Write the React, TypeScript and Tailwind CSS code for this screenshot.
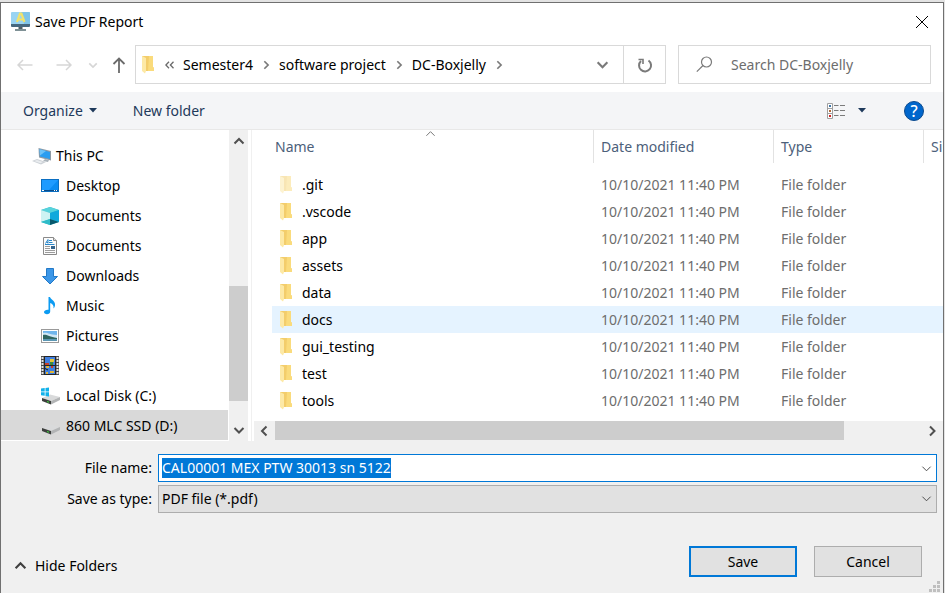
import { useEffect, useRef } from "react";
import type { ReactNode } from "react";

function Chevron({ dir, className }: { dir: "up" | "down" | "left" | "right"; className: string }) {
  const paths = {
    up: "M1.5 8.5 6 4l4.5 4.5",
    down: "M1.5 4 6 8.5 10.5 4",
    left: "M8.5 1.5 4 6l4.5 4.5",
    right: "M4 1.5 8.5 6 4 10.5",
  };
  return (
    <svg viewBox="0 0 12 12" className={className} fill="none" stroke="currentColor" aria-hidden="true">
      <path d={paths[dir]} />
    </svg>
  );
}

function FolderIcon({ faded = false }: { faded?: boolean }) {
  return (
    <svg viewBox="0 0 14 18" className={faded ? "h-[18px] w-[14px] opacity-50" : "h-[18px] w-[14px]"} aria-hidden="true">
      <path d="M2 0h11v11l1 1v3H2z" fill="#f3cd6b" />
      <path d="M9 0h4v11l1 1v3H8z" fill="#fadb7c" />
      <path d="M2 0l4 2v13l-1 2.500L2 15z" fill="#fde9a6" />
    </svg>
  );
}

function AppIcon() {
  return (
    <svg viewBox="0 0 20 20" className="h-5 w-5" aria-hidden="true">
      <rect x="1" y="0" width="19" height="14" rx="1" fill="#9ad4f2" />
      <path d="M11 0h8a1 1 0 0 1 1 1v11h-6z" fill="#7fc4e8" />
      <path d="M1 12h19v2a1 1 0 0 1-1 1H2a1 1 0 0 1-1-1z" fill="#46687f" />
      <path d="M8.500 15h4v3h-4z" fill="#4f6168" />
      <path d="M5 17h11v2H5z" fill="#7f9196" />
      <path d="M7 10 10 1.500h1.400L14.500 10M8.500 7.500h4.500" fill="none" stroke="#f2e36b" strokeWidth="2.200" />
    </svg>
  );
}

function ThisPcIcon() {
  return (
    <svg viewBox="0 0 20 18" className="h-[18px] w-5" aria-hidden="true">
      <path d="M6.500 1 19 4v9.500L7 10.500z" fill="#8d9aa5" />
      <path d="M7.500 2.300 18 4.900v7.200L8 9.500z" fill="#2a9df0" />
      <path d="M7.500 2.300 14 3.900 8 8.500z" fill="#6cc2f8" />
      <path d="m13 12-2 2 5 1 1-2z" fill="#aab3ba" />
      <path d="m0 14 5-2 9 3-5 2.500z" fill="#ccd1d6" />
      <path d="m2 14 3-1 6 2-2.500 1.200z" fill="#e9ecef" />
    </svg>
  );
}

function DesktopIcon() {
  return (
    <svg viewBox="0 0 18 18" className="h-[18px] w-[18px]" aria-hidden="true">
      <rect x="0" y="2" width="18" height="13" fill="#0b6fc2" />
      <rect x="1" y="3" width="16" height="10" fill="#1e9bff" />
      <path d="M17 3v10H8z" fill="#0a8cf2" />
      <path d="M1 13h16v1H1z" fill="#0a4a86" />
      <path d="M1 13h2v1H1zM13 13h1v1h-1zM15 13h1v1h-1z" fill="#fff" />
    </svg>
  );
}

function CubeIcon() {
  return (
    <svg viewBox="0 0 18 18" className="h-[18px] w-[18px]" aria-hidden="true">
      <path d="M0 3 9 0l9 3v12l-9 3-9-3z" fill="#35b9c9" />
      <path d="M0 3 9 0l9 3-9 3z" fill="#58d3dc" />
      <path d="M0 3 9 6v6l-9 3z" fill="#cdf3f3" />
      <path d="M18 3 9 6v6l9 3z" fill="#11a9dc" />
      <path d="m0 15 9-3v6z" fill="#2fbcc8" />
      <path d="m18 15-9-3v6z" fill="#08586c" />
    </svg>
  );
}

function DocumentIcon() {
  return (
    <svg viewBox="0 0 18 18" className="h-[18px] w-[18px]" aria-hidden="true">
      <path d="M2.500.5h10l3 3v14h-13z" fill="#fcfcfc" stroke="#8a8a8a" />
      <path d="M12.500.5v3h3" fill="#ddd" stroke="#8a8a8a" />
      <path d="m4.500 6.500 2.500-4v4M5.500 5.500H7" fill="none" stroke="#2a87c9" />
      <path d="M8 3.500h3M8 5.500h3.500M4 7.500h9.500" stroke="#2a87c9" />
      <path d="M4 9.500h5M4 11.500h5M4 13.500h10M4 15.500h10" stroke="#9c9c9c" />
      <rect x="10" y="9" width="4" height="3" fill="#33638c" />
    </svg>
  );
}

function DownloadIcon() {
  return (
    <svg viewBox="0 0 18 18" className="h-[18px] w-[18px]" aria-hidden="true">
      <path d="M5.500 1.500h7v8h4L9 17 1.500 9.500h4z" fill="#3c97e8" stroke="#2279c7" />
    </svg>
  );
}

function MusicIcon() {
  return (
    <svg viewBox="0 0 18 18" className="h-[18px] w-[18px]" aria-hidden="true">
      <path d="M7.500 0H9c.4 2.300 4.600 3.500 5 7 .2 2-.6 3.500-1.500 4.500.6-3-1-4.700-3.300-5.500v8.500c0 1.800-1.500 2.700-3.200 2.700S3 16.400 3 15c0-1.600 2-2.600 4.500-2.300z" fill="#0c9bf2" />
    </svg>
  );
}

function PictureIcon() {
  return (
    <svg viewBox="0 0 18 18" className="h-[18px] w-[18px]" aria-hidden="true">
      <rect x="0.5" y="2.500" width="17" height="13" fill="#fff" stroke="#9a9a9a" />
      <rect x="2" y="4" width="14" height="10" fill="#6fb5ec" />
      <path d="M2 6c5-1 6 2 14 2v3H2z" fill="#cfe6f5" />
      <path d="M2 8c3-1 6 1.500 14 3v1H2z" fill="#2f6560" />
      <path d="M2 12h14v2H2z" fill="#5b97b4" />
    </svg>
  );
}

function VideoIcon() {
  return (
    <svg viewBox="0 0 18 19" className="h-[19px] w-[18px]" aria-hidden="true">
      <rect width="18" height="19" fill="#4a4a4a" />
      <path d="M1.500 1v18M16.500 1v18" stroke="#e3e3e3" strokeWidth="2" strokeDasharray="2 1" />
      <path d="M3 0h12v19H3z" fill="#262626" />
      <rect x="4" y="1" width="10" height="8" fill="#3f7fe0" />
      <rect x="4" y="10" width="10" height="8" fill="#3f7fe0" />
      <path d="M9 3h4v3H9z" fill="#e8c63a" />
      <path d="M9 6h3v3H9z" fill="#3e8a3c" />
      <path d="M4 7h4v2H4zM10 10h2v2h-2z" fill="#c8402c" />
      <path d="M5 10h3v2H5zM9 15h4v2H9zM5 16h2v2H5z" fill="#e0b63a" />
      <path d="M4 12.500 7 14" stroke="#1b1b1b" />
    </svg>
  );
}

function DriveIcon({ windows = false }: { windows?: boolean }) {
  return (
    <svg viewBox="0 0 20 18" className="h-[18px] w-5" aria-hidden="true">
      <path d="m1 11 8-3.500 10 2.500-9 4z" fill="#d9dadb" />
      <path d="m1 11 9 3v3.500l-9-3.500z" fill="#3c3f3d" />
      <path d="m10 14 9-4v3l-9 4.500z" fill="#b2b4b5" />
      <path d="m6 14 2 .7v1L6 15z" fill="#3ddc3d" />
      {windows && (
        <path d="m0 1.500 3.700-.5v3.500H0zM4.500.900 8 .4v4.100H4.500zM0 5.300h3.700v3.500L0 8.300zM4.500 5.300H8v4.100l-3.500-.5z" fill="#10b1ea" />
      )}
    </svg>
  );
}

const places: { label: string; icon: ReactNode; root?: boolean; active?: boolean }[] = [
  { label: "This PC", icon: <ThisPcIcon />, root: true },
  { label: "Desktop", icon: <DesktopIcon /> },
  { label: "Documents", icon: <CubeIcon /> },
  { label: "Documents", icon: <DocumentIcon /> },
  { label: "Downloads", icon: <DownloadIcon /> },
  { label: "Music", icon: <MusicIcon /> },
  { label: "Pictures", icon: <PictureIcon /> },
  { label: "Videos", icon: <VideoIcon /> },
  { label: "Local Disk (C:)", icon: <DriveIcon windows /> },
  { label: "860 MLC SSD (D:)", icon: <DriveIcon />, active: true },
];

const folders = [".git", ".vscode", "app", "assets", "data", "docs", "gui_testing", "test", "tools"];
const crumbs = ["Semester4", "software project", "DC-Boxjelly"];

function TitleBar() {
  return (
    <header className="flex h-[38px] items-center justify-between pl-[9px] pr-[14px]">
      <div className="flex items-center gap-[5px]">
        <AppIcon />
        <h1>Save PDF Report</h1>
      </div>
      <button type="button" aria-label="Close">
        <svg viewBox="0 0 14 14" className="h-[14px] w-[14px]" fill="none" stroke="#000" aria-hidden="true">
          <path d="m1 1 12 12M13 1 1 13" />
        </svg>
      </button>
    </header>
  );
}

function AddressRow() {
  return (
    <div className="flex gap-3 pr-3 pt-1">
      <div className="flex flex-1">
        <div className="flex w-[134px] items-center pl-4 text-[#d6d6d6]">
          <button type="button" aria-label="Back" className="w-[39px]">
            <svg viewBox="0 0 16 12" className="h-3 w-4" fill="none" stroke="currentColor" strokeWidth="1.500" aria-hidden="true">
              <path d="M15.500 6H1.500M6 1 1 6l5 5" />
            </svg>
          </button>
          <button type="button" aria-label="Forward" className="w-8">
            <svg viewBox="0 0 16 12" className="h-3 w-4" fill="none" stroke="currentColor" strokeWidth="1.500" aria-hidden="true">
              <path d="M.5 6h14M10 1l5 5-5 5" />
            </svg>
          </button>
          <button type="button" aria-label="Recent locations" className="w-6">
            <Chevron dir="down" className="h-[10px] w-[10px] stroke-2" />
          </button>
          <button type="button" aria-label="Up" className="text-[#6b6b6b]">
            <svg viewBox="0 0 14 16" className="h-4 w-[14px]" fill="none" stroke="currentColor" strokeWidth="1.800" aria-hidden="true">
              <path d="M7 16V1.500M1.500 7 7 1.500 12.500 7" />
            </svg>
          </button>
        </div>
        <nav aria-label="Path" className="flex h-[39px] flex-1 items-center border border-[#d9d9d9] pl-1">
          <FolderIcon />
          <svg viewBox="0 0 10 8" className="ml-[11px] mr-2 h-2 w-[10px]" fill="none" stroke="#6b6b6b" strokeWidth="1.300" aria-hidden="true">
            <path d="M4 .8.900 4 4 7.200M8.500.8 5.400 4l3.100 3.200" />
          </svg>
          {crumbs.map((crumb) => (
            <div key={crumb} className="flex items-center">
              <button type="button">{crumb}</button>
              <span className="flex w-[26px] justify-center text-[#7a7a7a]">
                <Chevron dir="right" className="h-[10px] w-[10px] stroke-2" />
              </span>
            </div>
          ))}
          <button type="button" aria-label="Previous locations" className="ml-auto flex h-full w-[41px] items-center justify-center text-[#7a7a7a]">
            <Chevron dir="down" className="h-[13px] w-[13px] stroke-2" />
          </button>
          <button type="button" aria-label="Refresh" className="flex h-full w-[42px] items-center justify-center border-l border-[#d9d9d9]">
            <svg viewBox="0 0 16 16" className="h-4 w-4" fill="none" stroke="#7a7a7a" strokeWidth="2" aria-hidden="true">
              <path d="M11.500 3.500a6 6 0 1 1-7.500.500" />
              <path d="M1.500 2.500H6V7" strokeWidth="1.600" />
            </svg>
          </button>
        </nav>
      </div>
      <label className="flex h-[39px] w-[253px] items-center gap-[18px] border border-[#d9d9d9] pl-[17px]">
        <svg viewBox="0 0 17 17" className="h-[17px] w-[17px] shrink-0" fill="none" stroke="#7b7b7b" strokeWidth="1.200" aria-label="Search">
          <circle cx="10.500" cy="6" r="5" />
          <path d="M7 9.500.8 15.700" />
        </svg>
        <input
          type="text"
          placeholder="Search DC-Boxjelly"
          className="w-full min-w-0 outline-none placeholder:text-[#6d6d6d]"
        />
      </label>
    </div>
  );
}

function Toolbar() {
  return (
    <div className="mt-2 flex h-[38px] items-center border-b border-[#e8e8e8] bg-[#f4f5f7] pl-[22px] pr-[19px] text-[#1e395b]">
      <button type="button" className="flex items-center gap-[6px]">
        Organize
        <svg viewBox="0 0 8 5" className="h-[5px] w-2" fill="currentColor" aria-hidden="true">
          <path d="M0 0h8L4 4.500z" />
        </svg>
      </button>
      <button type="button" className="ml-9">
        New folder
      </button>
      <button type="button" aria-label="Change view" className="ml-auto">
        <svg viewBox="0 0 18 16" className="h-4 w-[18px]" fill="none" aria-hidden="true">
          <path d="M.5.5h5v15h-5zM.5 5.500h5M.5 10.500h5" stroke="#a0a0a0" fill="#fff" />
          <path d="M7 2.500h4.500M13 2.500h5M7 7.500h4.500M13 7.500h5M7 12.500h4.500M13 12.500h5" stroke="#7b7b7b" />
          <path d="M2 2h2v2H2z" fill="#3c75a8" />
          <path d="M2 7h2v2H2z" fill="#b0693a" />
          <path d="M2 12h2v2H2z" fill="#d02020" />
        </svg>
      </button>
      <button type="button" aria-label="More view options" className="ml-[13px]">
        <svg viewBox="0 0 8 5" className="h-[5px] w-2" fill="currentColor" aria-hidden="true">
          <path d="M0 0h8L4 4.500z" />
        </svg>
      </button>
      <button
        type="button"
        aria-label="Help"
        className="ml-[38px] flex h-5 w-5 items-center justify-center rounded-full border border-[#0b4a8e] bg-[#0066cc] text-[16px] font-medium text-white"
      >
        ?
      </button>
    </div>
  );
}

function PlacesPane() {
  return (
    <aside className="flex w-[247px] shrink-0">
      <ul className="flex-1 pb-px pt-[10px]">
        {places.map((place, index) => (
          <li key={index}>
            <button
              type="button"
              className={`flex h-[30px] w-full items-center pt-px ${place.root ? "pl-[31px]" : "pl-10"} ${
                place.active ? "bg-[#d9d9d9]" : ""
              }`}
            >
              <span className={`flex shrink-0 ${place.root ? "w-6" : "w-[25px]"}`}>{place.icon}</span>
              {place.label}
            </button>
          </li>
        ))}
      </ul>
      <div className="ml-px flex w-[19px] flex-col items-center bg-[#f0f0f0] text-[#505050]">
        <button type="button" aria-label="Scroll up" className="flex h-[22px] items-center">
          <Chevron dir="up" className="h-3 w-3 stroke-2" />
        </button>
        <div className="flex w-full flex-1 flex-col justify-end pb-[18px]">
          <div className="h-[115px] bg-[#cdcdcd]" />
        </div>
        <button type="button" aria-label="Scroll down" className="flex h-[22px] items-center">
          <Chevron dir="down" className="h-3 w-3 stroke-2" />
        </button>
      </div>
    </aside>
  );
}

function FilesPane() {
  return (
    <section className="ml-[3px] flex min-w-0 flex-1 flex-col border-l border-[#f0f0f0] pl-[2px]">
      <div className="flex-1 overflow-hidden pl-[18px]">
        <table className="w-full table-fixed text-left">
          <colgroup>
            <col />
            <col className="w-[180px]" />
            <col className="w-[150px]" />
            <col className="w-[19px]" />
          </colgroup>
          <thead className="text-[#4c607a]">
            <tr className="h-[41px]">
              <th className="p-0 align-top font-normal">
                <div className="relative flex h-[33px] items-center border-r border-[#e2e2e2] pl-[3px]">
                  Name
                  <Chevron dir="up" className="absolute left-[153px] top-[-2px] h-[11px] w-[11px] text-[#6a6a6a]" />
                </div>
              </th>
              <th className="p-0 align-top font-normal">
                <div className="flex h-[33px] items-center border-r border-[#e2e2e2] pl-[7px]">Date modified</div>
              </th>
              <th className="p-0 align-top font-normal">
                <div className="flex h-[33px] items-center border-r border-[#e2e2e2] pl-[7px]">Type</div>
              </th>
              <th className="p-0 align-top font-normal">
                <div className="flex h-[33px] items-center pl-[7px]">Si</div>
              </th>
            </tr>
          </thead>
          <tbody className="text-[#6d6d6d]">
            {folders.map((name) => (
              <tr key={name} className={name === "docs" ? "h-[27px] bg-[#e5f3ff]" : "h-[27px]"}>
                <td className="p-0">
                  <div className="flex items-center gap-[10px] pl-[6px] text-black">
                    <FolderIcon faded={name === ".git"} />
                    {name}
                  </div>
                </td>
                <td className="p-0 pl-[7px]">10/10/2021 11:40 PM</td>
                <td className="p-0 pl-[7px]">File folder</td>
                <td className="p-0" />
              </tr>
            ))}
          </tbody>
        </table>
      </div>
      <div className="flex h-5 items-center bg-[#f0f0f0] text-[#505050]">
        <button type="button" aria-label="Scroll left" className="flex w-[21px] justify-center pr-[2px]">
          <Chevron dir="left" className="h-3 w-3 stroke-2" />
        </button>
        <div className="h-full flex-1">
          <div className="h-[19px] w-[88%] bg-[#cdcdcd]" />
        </div>
        <button type="button" aria-label="Scroll right" className="flex w-[21px] justify-center pr-[2px]">
          <Chevron dir="right" className="h-3 w-3 stroke-2" />
        </button>
      </div>
    </section>
  );
}

function SaveForm() {
  const nameRef = useRef<HTMLInputElement>(null);

  useEffect(() => {
    nameRef.current?.focus();
    nameRef.current?.select();
  }, []);

  return (
    <form className="flex flex-1 flex-col bg-[#f0f0f0]" onSubmit={(event) => event.preventDefault()}>
      <div className="grid grid-cols-[151px_1fr] items-center gap-x-[6px] gap-y-[3px] pr-[6px] pt-[13px]">
        <label htmlFor="file-name" className="text-right">
          File name:
        </label>
        <div className="flex h-7 items-center border border-[#0078d7] bg-white pl-[3px] pr-[4px]">
          <input
            ref={nameRef}
            id="file-name"
            type="text"
            defaultValue="CAL00001 MEX PTW 30013 sn 5122"
            className="h-5 min-w-0 flex-1 outline-none selection:bg-[#0078d7] selection:text-white"
          />
          <button type="button" aria-label="Show recent names">
            <Chevron dir="down" className="h-[11px] w-[11px] text-[#404040]" />
          </button>
        </div>
        <label htmlFor="file-type" className="text-right">
          Save as type:
        </label>
        <div className="relative">
          <select id="file-type" className="block h-7 w-full appearance-none border border-[#adadad] bg-[#e1e1e1] pl-[3px]">
            <option>PDF file (*.pdf)</option>
          </select>
          <Chevron dir="down" className="pointer-events-none absolute right-[5px] top-2 h-[11px] w-[11px] text-[#404040]" />
        </div>
      </div>
      <div className="mt-auto flex items-end pl-[13px]">
        <button type="button" className="mb-3 flex h-[31px] items-center gap-2">
          <Chevron dir="up" className="h-[13px] w-[13px] stroke-2 text-[#404040]" />
          Hide Folders
        </button>
        <button type="submit" className="mb-4 ml-auto h-[31px] w-[108px] border-2 border-[#0078d7] bg-[#e1e1e1]">
          Save
        </button>
        <button type="button" className="mb-4 ml-[17px] h-[31px] w-[108px] border border-[#adadad] bg-[#e1e1e1]">
          Cancel
        </button>
        <svg viewBox="0 0 14 12" className="ml-[7px] h-3 w-[14px]" fill="#bfbfbf" aria-hidden="true">
          <path d="M8 0h3v3H8zM4 4h3v3H4zM8 4h3v3H8zM0 8h3v3H0zM4 8h3v3H4zM8 8h3v3H8z" />
        </svg>
      </div>
    </form>
  );
}

export default function App() {
  return (
    <div className="flex min-h-screen flex-col bg-[#e3e3e3] pr-px pt-[2px] font-['Noto_Sans','Open_Sans',sans-serif] text-[14px] leading-5 text-black">
      <main className="flex flex-1 flex-col border-x border-t border-[#707070] bg-white">
        <TitleBar />
        <AddressRow />
        <Toolbar />
        <div className="flex">
          <PlacesPane />
          <FilesPane />
        </div>
        <SaveForm />
      </main>
    </div>
  );
}
